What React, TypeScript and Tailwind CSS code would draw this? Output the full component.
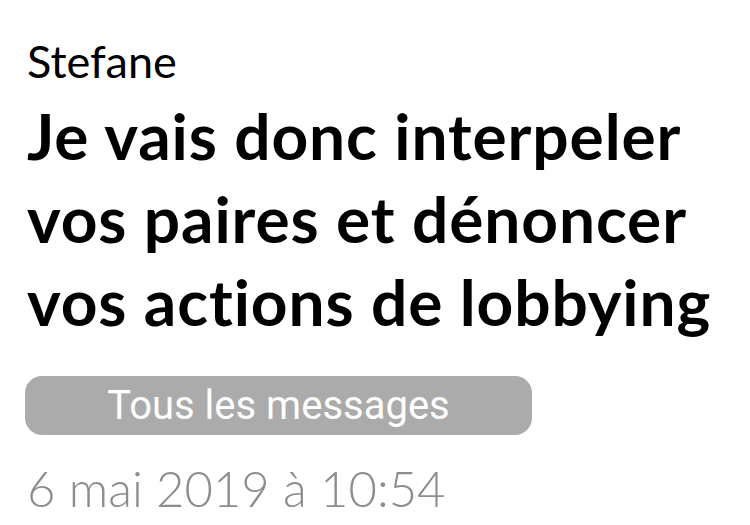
import React from 'react';

const App: React.FC = () => {
    return (
        <div className="w-[750px] h-[525px] bg-white overflow-hidden px-[27px] pt-[35px]" style={{ fontFamily: 'Lato, "Noto Sans", sans-serif' }}>
            <div className="text-[45px] leading-[52px] text-black font-normal">Stefane</div>
            <h1 className="text-[64px] leading-[83px] font-bold text-black mt-[7px] tracking-[0.9px] whitespace-nowrap">
                Je vais donc interpeler<br />
                vos paires et dénoncer<br />
                vos actions de lobbying
            </h1>
            <button className="mt-[33px] -ml-[2px] w-[507px] h-[59px] rounded-[17px] bg-[#ababab] text-white text-[40px] leading-none flex items-center justify-center" style={{ fontFamily: 'Roboto, "Liberation Sans", sans-serif' }}>
                Tous les messages
            </button>
            <div className="mt-[25px] text-[49px] leading-[56px] text-[#8c8c8c] font-light">6 mai 2019 à 10:54</div>
        </div>
    );
};

export default App;
